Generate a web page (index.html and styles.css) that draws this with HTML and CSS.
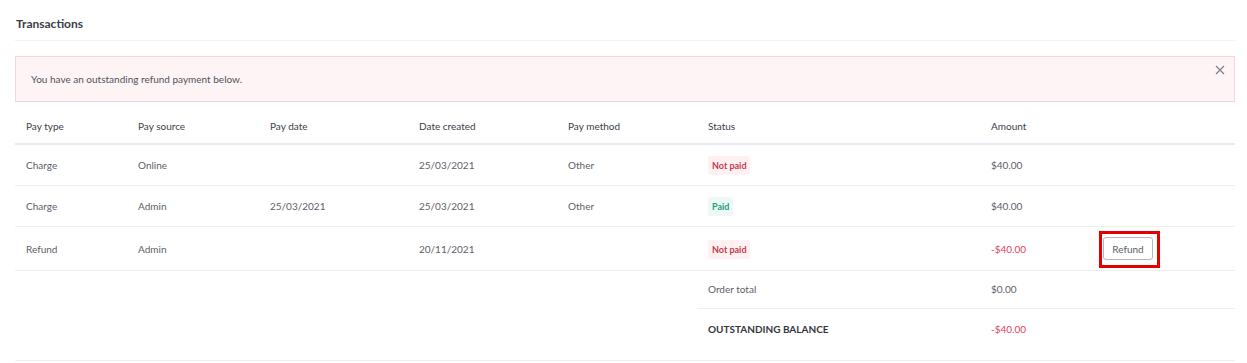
FILE: index.html
```html
<!DOCTYPE html>
<html>

<head>
    <title>Transactions</title>
    <link rel="stylesheet" href="styles.css">
</head>

<body>
    <div class="panel">
        <h2 class="panel-title">Transactions</h2>

        <div class="alert">
            <span>You have an outstanding refund payment below.</span>
            <button class="alert-close" aria-label="Close">
                <svg width="10" height="10" viewBox="0 0 10 10">
                    <path d="M1 1L9 9M9 1L1 9" stroke="#7d828c" stroke-width="1.3" />
                </svg>
            </button>
        </div>

        <table class="tx-table">
            <colgroup>
                <col style="width:112px">
                <col style="width:132px">
                <col style="width:149px">
                <col style="width:149px">
                <col style="width:140px">
                <col style="width:283px">
                <col style="width:112px">
                <col>
            </colgroup>
            <thead>
                <tr>
                    <th>Pay type</th>
                    <th>Pay source</th>
                    <th>Pay date</th>
                    <th>Date created</th>
                    <th>Pay method</th>
                    <th>Status</th>
                    <th>Amount</th>
                    <th></th>
                </tr>
            </thead>
            <tbody>
                <tr>
                    <td>Charge</td>
                    <td>Online</td>
                    <td></td>
                    <td>25/03/2021</td>
                    <td>Other</td>
                    <td><span class="badge badge-unpaid">Not paid</span></td>
                    <td>$40.00</td>
                    <td></td>
                </tr>
                <tr>
                    <td>Charge</td>
                    <td>Admin</td>
                    <td>25/03/2021</td>
                    <td>25/03/2021</td>
                    <td>Other</td>
                    <td><span class="badge badge-paid">Paid</span></td>
                    <td>$40.00</td>
                    <td></td>
                </tr>
                <tr class="row-action">
                    <td>Refund</td>
                    <td>Admin</td>
                    <td></td>
                    <td>20/11/2021</td>
                    <td></td>
                    <td><span class="badge badge-unpaid">Not paid</span></td>
                    <td class="negative">-$40.00</td>
                    <td>
                        <span class="highlight-wrap">
                            <button class="btn-refund">Refund</button>
                            <span class="highlight"></span>
                        </span>
                    </td>
                </tr>
                <tr class="row-total">
                    <td colspan="5" class="blank"></td>
                    <td>Order total</td>
                    <td>$0.00</td>
                    <td></td>
                </tr>
                <tr class="row-balance">
                    <td colspan="5"></td>
                    <td class="balance-label">OUTSTANDING BALANCE</td>
                    <td class="negative">-$40.00</td>
                    <td></td>
                </tr>
            </tbody>
        </table>
    </div>
</body>

</html>
```

FILE: styles.css
```css
* {
    box-sizing: border-box;
    margin: 0;
    padding: 0;
}

body {
    background: #ffffff;
    font-family: Lato, "Open Sans", sans-serif;
    font-size: 10px;
    color: #5d6068;
}

.panel {
    padding: 14px 12px 0 15px;
}

.panel-title {
    font-size: 12px;
    font-weight: 700;
    line-height: 20px;
    color: #3a3e48;
    padding-bottom: 6px;
    padding-left: 1px;
    border-bottom: 1px solid #f2f2f2;
}

/* alert banner */
.alert {
    position: relative;
    margin-top: 15px;
    padding: 12px 15px;
    line-height: 20px;
    background: #fef3f5;
    border: 1px solid #f5d6dc;
    color: #50545c;
}

.alert-close {
    position: absolute;
    right: 9px;
    top: 8px;
    border: none;
    background: none;
    width: 10px;
    height: 10px;
    cursor: pointer;
}

.alert-close svg {
    display: block;
}

/* table */
.tx-table {
    width: 100%;
    margin-top: 4px;
    border-collapse: collapse;
    table-layout: fixed;
    font-size: 10px;
}

.tx-table th {
    text-align: left;
    font-weight: 400;
    color: #3c4049;
    line-height: 20px;
    padding: 10px 11px 7px;
    border-bottom: 2px solid #e9eaf0;
}

.tx-table td {
    line-height: 20px;
    padding: 10px 11px;
    border-bottom: 1px solid #efefef;
    vertical-align: middle;
    white-space: nowrap;
}

.row-total td {
    padding-top: 8px;
    padding-bottom: 9px;
}

.row-total td.blank {
    border-bottom: none;
}

.row-balance td {
    padding-bottom: 21px;
}

.balance-label {
    font-weight: 700;
    color: #33363d;
}

.negative {
    color: #e0455a;
}

.badge {
    display: inline-block;
    font-size: 9px;
    font-weight: 700;
    line-height: 13px;
    padding: 3px 4px;
    margin-top: 1px;
    border-radius: 3px;
    vertical-align: top;
}

.badge-unpaid {
    background: #fff0f2;
    color: #c23a4e;
}

.badge-paid {
    background: #edf9f6;
    color: #2a9a7e;
}

/* refund action */
.highlight-wrap {
    position: relative;
    display: inline-block;
    vertical-align: top;
}

.btn-refund {
    display: block;
    width: 50px;
    height: 23px;
    font-family: Lato, "Open Sans", sans-serif;
    font-size: 10px;
    color: #5a5e66;
    background: #ffffff;
    border: 1px solid #b3b6bd;
    border-radius: 3px;
    cursor: pointer;
}

.highlight {
    position: absolute;
    left: -4px;
    top: -6px;
    right: -7px;
    bottom: -8px;
    border: 3px solid #e50000;
}
```
